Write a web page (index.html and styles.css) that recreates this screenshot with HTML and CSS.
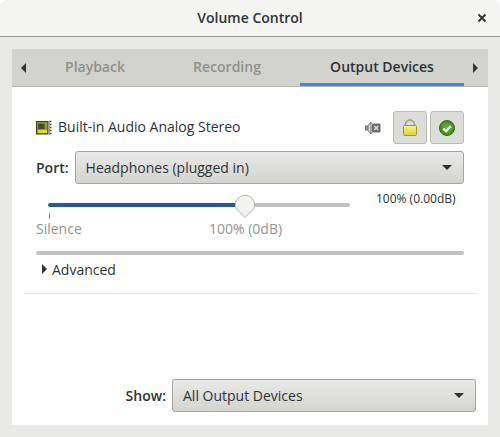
FILE: index.html
```html
<!DOCTYPE html>
<html lang="en">
<head>
<meta charset="utf-8">
<title>Volume Control</title>
<link rel="stylesheet" href="styles.css">
</head>
<body>
<div class="window">
  <header class="titlebar">
    <span class="title">Volume Control</span>
    <svg class="close" width="10" height="10" viewBox="0 0 10 10"><path d="M1.5 1.5l7 7M8.500 1.500l-7 7" stroke="#2e3436" stroke-width="2"/></svg>
  </header>
  <main class="content">
    <div class="notebook">
      <nav class="tabs">
        <span class="arrow arrow-left"></span>
        <span class="tab tab-playback">Playback</span>
        <span class="tab tab-recording">Recording</span>
        <span class="tab tab-active">Output Devices</span>
        <span class="arrow arrow-right"></span>
      </nav>
      <section class="page">
        <div class="device">
          <div class="device-head">
            <svg class="card-icon" width="16" height="16" viewBox="0 0 16 16">
              <rect x="0.500" y="1.500" width="11.500" height="12.500" fill="#8f9c22" stroke="#3c4014"/>
              <rect x="2" y="3.500" width="6.500" height="5.500" fill="#454f2e"/>
              <rect x="2" y="10" width="9" height="3" fill="#dadd34"/>
              <path d="M13 1.500h2.500M13 4.500h2.500M13 7.500h2.500M13 10.500h2.500M13 13.500h2.500" stroke="#4c4c48" stroke-width="1.400"/>
              <path d="M13.500 1v14" stroke="#a0a09a"/>
            </svg>
            <span class="device-name">Built-in Audio Analog Stereo</span>
            <svg class="mute-icon" width="16" height="16" viewBox="0 0 16 16">
              <path d="M0.500 6h1.500v4H0.500zM3 5.500l3-3.500v12l-3-3.500z" fill="#e0e0de" stroke="#555" stroke-width="0.900"/>
              <rect x="7" y="3.500" width="8.500" height="9" rx="1.200" fill="#6e6e6c"/>
              <path d="M9.300 6l3.900 4M13.200 6l-3.900 4" stroke="#e4e4e2" stroke-width="1.300"/>
            </svg>
            <button class="square">
              <svg width="16" height="18" viewBox="0 0 16 18">
                <defs><linearGradient id="lock" x1="0" y1="0" x2="0" y2="1"><stop offset="0" stop-color="#f6f09a"/><stop offset="1" stop-color="#dcd428"/></linearGradient></defs>
                <path d="M3.500 7V5.500a4.500 4.500 0 0 1 9 0V7" fill="none" stroke="#a4a49c" stroke-width="1.800"/>
                <rect x="1.500" y="6.500" width="13" height="10" rx="1" fill="url(#lock)" stroke="#a09a20"/>
              </svg>
            </button>
            <button class="square">
              <svg width="18" height="18" viewBox="0 0 18 18">
                <defs><radialGradient id="ok"><stop offset="0" stop-color="#6fb63a"/><stop offset="1" stop-color="#3f8a1c"/></radialGradient></defs>
                <circle cx="9" cy="9" r="7.500" fill="url(#ok)" stroke="#2f6a12"/>
                <path d="M5.200 9.500l2.800 2.600 5-5" fill="none" stroke="#eef4e4" stroke-width="2.300"/>
              </svg>
            </button>
          </div>
          <div class="port-row">
            <span class="label">Port:</span>
            <div class="combo"><span>Headphones (plugged in)</span><i class="caret"></i></div>
          </div>
          <div class="volume">
            <div class="scale">
              <div class="slider">
                <div class="fill"></div>
                <div class="rest"></div>
                <svg class="knob" width="22" height="25" viewBox="0 0 22 25"><path d="M11 23.500L2.600 15.200A9.800 9.800 0 0 1 1.200 11a9.800 9.800 0 0 1 19.600 0 9.800 9.800 0 0 1-1.400 4.200z" fill="#f2f2f0" stroke="#b4b4ae"/></svg>
              </div>
              <div class="ticks">
                <div class="mark mark-start"><i></i><span>Silence</span></div>
                <div class="mark mark-mid"><span>100% (0dB)</span></div>
              </div>
            </div>
            <span class="readout">100% (0.00dB)</span>
          </div>
          <div class="level"></div>
          <div class="advanced"><i class="adv-arrow"></i><span>Advanced</span></div>
        </div>
        <div class="separator"></div>
      </section>
      <footer class="show-row">
        <span class="label">Show:</span>
        <div class="combo combo-show"><span>All Output Devices</span><i class="caret"></i></div>
      </footer>
    </div>
  </main>
</div>
</body>
</html>
```
FILE: styles.css
```css
* { box-sizing: border-box; }
html, body { margin: 0; height: 100%; }
body { background: #fff; font-family: "Open Sans", "Noto Sans", sans-serif; font-size: 14px; color: #2e3436; }
.window { width: 500px; height: 437px; display: flex; flex-direction: column; background: #e8e8e7; overflow: hidden; border-radius: 8px 8px 0 0; }
.titlebar { position: relative; flex: 0 0 37px; display: flex; align-items: center; justify-content: center; background: #f4f4f3; border-bottom: 1px solid #9b9b98; }
.title { font-weight: 600; font-size: 14px; line-height: 1; }
.close { position: absolute; right: 13px; top: 13px; }
.content { flex: 1; min-width: 0; padding: 12px; display: flex; }
.notebook { flex: 1; min-width: 0; display: flex; flex-direction: column; background: #fff; }
.tabs { flex: 0 0 37px; display: flex; align-items: center; background: #d2d2ce; border-bottom: 1px solid #b5b5b1; font-weight: 600; font-size: 14px; }
.arrow { flex: none; width: 0; height: 0; border-top: 5px solid transparent; border-bottom: 5px solid transparent; }
.arrow-left { margin-left: 9px; border-right: 5px solid #2e3436; }
.arrow-right { margin-left: 9px; border-left: 5px solid #2e3436; }
.tab { flex: none; display: flex; align-items: center; justify-content: center; height: 37px; padding-bottom: 2px; color: #8f908d; }
.tab-playback { width: 138px; }
.tab-recording { width: 126px; }
.tab-active { width: 164px; margin-left: 10px; padding-bottom: 0; color: #2e3436; border-bottom: 3px solid #4a86c5; }
.page { flex: 1; padding: 0 12px; }
.device { padding: 0 12px; }
.device-head { display: flex; align-items: center; margin-top: 24px; height: 33px; }
.device-name { margin-left: 6px; flex: 1; padding-bottom: 2px; }
.card-icon { display: block; }
.mute-icon { margin-right: 9px; }
.square { width: 34px; height: 33px; margin-left: 3px; padding: 0; display: flex; align-items: center; justify-content: center; background: #dcdcd9; border: 1px solid #bcbcb8; border-radius: 3px; }
.port-row { display: flex; align-items: center; margin-top: 7px; }
.label { font-weight: 600; }
.combo { flex: 1; display: flex; align-items: center; justify-content: space-between; height: 33px; margin-left: 6px; padding: 0 11px 0 10px; background: linear-gradient(#e9e9e7, #d4d4d1); border: 1px solid #a4a4a0; border-radius: 3px; }
.caret { width: 0; height: 0; border-left: 5px solid transparent; border-right: 5px solid transparent; border-top: 5px solid #2e3436; }
.volume { display: flex; align-items: flex-start; margin-top: 7px; }
.scale { width: 314px; flex: none; }
.readout { margin-left: 26px; font-size: 12px; line-height: 16px; white-space: nowrap; }
.slider { position: relative; display: flex; height: 23px; margin: 2px 0 0 12px; align-items: center; }
.fill { width: 197px; height: 4px; background: #215d9c; border-radius: 2px 0 0 2px; }
.rest { width: 105px; height: 4px; background: #c2c2be; border-radius: 0 2px 2px 0; }
.knob { position: absolute; left: 186px; top: 1px; }
.ticks { display: flex; margin-top: -3px; color: #929595; height: 28px; }
.mark-start { width: 173px; }
.mark-start i { display: block; width: 1px; height: 6px; margin-left: 13px; background: #9a9a98; }
.mark-start span { display: block; }
.mark-mid { padding-top: 6px; }
.level { height: 4px; margin-top: 10px; background: #c2c2be; border-radius: 2px; }
.advanced { display: flex; align-items: center; margin-top: 3px; height: 22px; }
.adv-arrow { width: 0; height: 0; margin: 0 5px 0 6px; border-top: 5px solid transparent; border-bottom: 5px solid transparent; border-left: 5px solid #2e3436; }
.separator { height: 1px; margin-top: 13px; background: #e8e8e7; }
.show-row { display: flex; align-items: center; justify-content: flex-end; padding: 0 12px 13px; }
.combo-show { flex: 0 0 304px; }
```
